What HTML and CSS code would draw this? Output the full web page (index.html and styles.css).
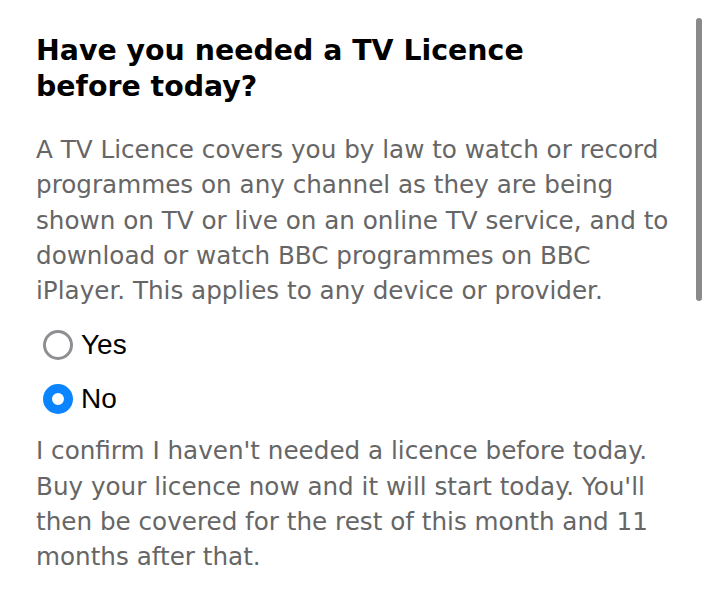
FILE: index.html
```html
<!DOCTYPE html>
<html lang="en">
<head>
<meta charset="utf-8">
<title>TV Licence</title>
<link rel="stylesheet" href="styles.css">
</head>
<body>
<div class="page">
  <main class="content">
    <h1 class="title">Have you needed a TV Licence before today?</h1>
    <p class="text">A TV Licence covers you by law to watch or record programmes on any channel as they are being shown on TV or live on an online TV service, and to download or watch BBC programmes on BBC iPlayer. This applies to any device or provider.</p>
    <div class="options">
      <label class="option">
        <span class="radio"></span>
        <span class="option-label">Yes</span>
      </label>
      <label class="option">
        <span class="radio radio-checked"></span>
        <span class="option-label">No</span>
      </label>
    </div>
    <p class="text text-confirm">I confirm I haven't needed a licence before today. Buy your licence now and it will start today. You'll then be covered for the rest of this month and 11 months after that.</p>
  </main>
  <div class="scrollbar"></div>
</div>
</body>
</html>
```

FILE: styles.css
```css
* { box-sizing: border-box; }
html, body {
  margin: 0;
  padding: 0;
  background: #ffffff;
}
body {
  font-family: "DejaVu Sans", Verdana, sans-serif;
  width: 707px;
  height: 600px;
  overflow: hidden;
}
.page {
  position: relative;
  width: 707px;
  height: 600px;
}
.content {
  padding: 33px 30px 0 36px;
}
.title {
  margin: 0;
  font-size: 28.4px;
  line-height: 36px;
  font-weight: bold;
  color: #000000;
  width: 560px;
}
.text {
  margin: 27px 0 0 0;
  font-size: 24.65px;
  line-height: 35.3px;
  color: #666666;
}
.options {
  display: flex;
  flex-direction: column;
  gap: 24px;
  margin-top: 22px;
  padding-left: 7px;
}
.option {
  display: flex;
  align-items: center;
  gap: 8px;
  height: 30px;
}
.radio {
  width: 30px;
  height: 30px;
  border-radius: 50%;
  border: 3px solid #8e8e93;
  background: #ffffff;
  flex: none;
}
.radio-checked {
  border: 9px solid #0a84ff;
  background: #ffffff;
}
.option-label {
  font-family: "Liberation Sans", Arial, sans-serif;
  font-size: 28px;
  line-height: 30px;
  color: #000000;
}
.text-confirm {
  margin-top: 19px;
}
.scrollbar {
  position: absolute;
  top: 18px;
  left: 696px;
  width: 6px;
  height: 283px;
  border-radius: 3px;
  background: #8a8a8a;
}
```
